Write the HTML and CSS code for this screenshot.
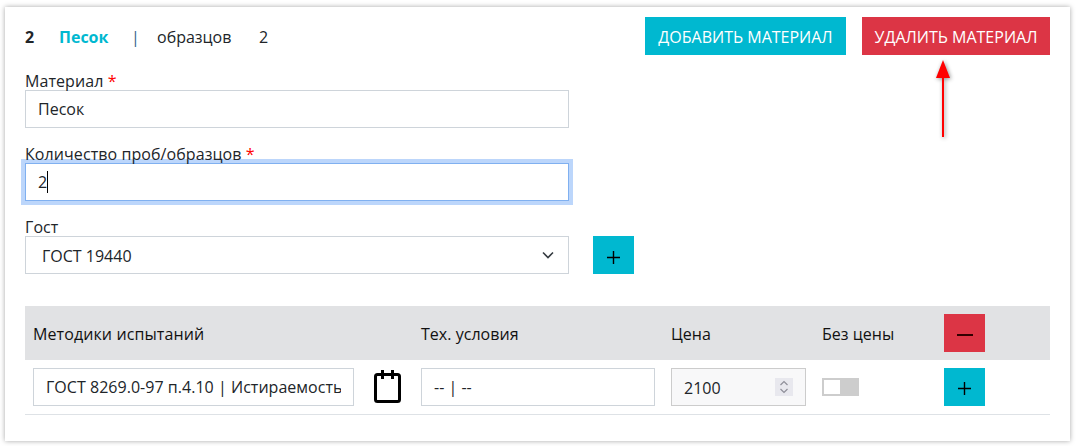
FILE: index.html
```html
<!DOCTYPE html>
<html lang="ru">
<head>
<meta charset="utf-8">
<title>Материал</title>
<link rel="stylesheet" href="styles.css">
</head>
<body>
<main class="card">
  <header class="toolbar">
    <div class="summary">
      <b class="num">2</b>
      <b class="name">Песок</b>
      <span class="sep">|</span>
      <span class="samples">образцов</span>
      <span class="count">2</span>
    </div>
    <div class="actions">
      <button class="btn btn-teal btn-add" type="button">ДОБАВИТЬ МАТЕРИАЛ</button>
      <button class="btn btn-red btn-del" type="button">УДАЛИТЬ МАТЕРИАЛ</button>
    </div>
  </header>

  <div class="field">
    <label class="label">Материал <span class="req">*</span></label>
    <input class="input" type="text" value="Песок">
  </div>
  <div class="field">
    <label class="label">Количество проб/образцов <span class="req">*</span></label>
    <div class="focus-wrap">
      <input class="input input-focus" type="text" value="2">
      <span class="caret"></span>
    </div>
  </div>
  <div class="field">
    <label class="label">Гост</label>
    <div class="select-row">
      <div class="select-wrap">
        <select class="select"><option>ГОСТ 19440</option></select>
        <svg class="chevron" width="12" height="8" viewBox="0 0 12 8"><path d="M1 1.500l5 5 5-5" fill="none" stroke="#343a40" stroke-width="1.600"/></svg>
      </div>
      <button class="btn btn-teal btn-icon" type="button" aria-label="Добавить">
        <svg width="13" height="13" viewBox="0 0 13 13"><path d="M6.500 0v13M0 6.500h13" stroke="#000" stroke-width="1.400"/></svg>
      </button>
    </div>
  </div>

  <section class="table">
    <div class="row row-head">
      <div class="cell cell-wide">Методики испытаний</div>
      <div></div>
      <div class="cell">Тех. условия</div>
      <div class="cell">Цена</div>
      <div class="cell">Без цены</div>
      <button class="btn btn-red btn-icon" type="button" aria-label="Удалить">
        <svg width="16" height="2" viewBox="0 0 16 2"><path d="M0 1h16" stroke="#300" stroke-width="2"/></svg>
      </button>
    </div>
    <div class="row row-body">
      <input class="input input-method" type="text" value="ГОСТ 8269.0-97 п.4.10 | Истираемость">
      <svg class="note" width="27" height="33" viewBox="0 0 27 33"><path d="M8.500 0v9M18.500 0v9" stroke="#000" stroke-width="3"/><rect x="1.500" y="4.500" width="24" height="27" rx="2" fill="none" stroke="#000" stroke-width="3"/></svg>
      <input class="input input-cond" type="text" value="-- | --">
      <div class="price">
        <input class="input input-price" type="text" value="2100">
        <span class="spin">
          <svg width="10" height="14" viewBox="0 0 10 14"><path d="M1.500 5L5 1.500 8.500 5M1.500 9L5 12.500 8.500 9" fill="none" stroke="#8f8f99" stroke-width="1.200"/></svg>
        </span>
      </div>
      <div class="toggle"><span class="knob"></span></div>
      <button class="btn btn-teal btn-icon" type="button" aria-label="Добавить">
        <svg width="13" height="13" viewBox="0 0 13 13"><path d="M6.500 0v13M0 6.500h13" stroke="#000" stroke-width="1.400"/></svg>
      </button>
    </div>
  </section>

  <svg class="arrow" width="24" height="90" viewBox="0 0 24 90"><path d="M12 12V77" stroke="#f00" stroke-width="2" fill="none"/><path d="M12 0L19 18H5Z" fill="#f00"/></svg>
</main>
</body>
</html>
```

FILE: styles.css
```css
* { box-sizing: border-box; }
html, body { margin: 0; background: #fff; }
body {
  padding: 7px 6px 5px 5px;
  font-family: "Open Sans", "Noto Sans", sans-serif;
  font-size: 16px;
  line-height: 20px;
  color: #212529;
}
.card {
  position: relative;
  height: 434px;
  padding: 10px 20px 0;
  background: #fff;
  box-shadow: 0 0 5px rgba(0, 0, 0, .35);
}
.toolbar { display: flex; justify-content: space-between; align-items: center; height: 38px; margin-bottom: 15px; }
.summary { display: flex; align-items: center; padding-top: 2px; }
.num { width: 34px; }
.name { width: 72px; color: #00b8d0; }
.sep { width: 26px; color: #37618a; }
.samples { width: 102px; }
.actions { display: flex; gap: 16px; }
.btn { border: 0; padding: 0; margin: 0; font: inherit; cursor: pointer; display: flex; align-items: center; justify-content: center; }
.btn-teal { background: #00b8d0; }
.btn-red { background: #dc3545; }
.btn-add, .btn-del { height: 38px; color: #fff; padding-top: 2px; }
.btn-add { width: 201px; }
.btn-del { width: 188px; }
.btn-icon { width: 41px; height: 38px; padding-top: 4px; }
.field { margin-bottom: 15px; }
.label { display: block; position: relative; z-index: 1; height: 20px; padding-top: 1px; letter-spacing: .08px; }
.req { color: #f00; }
.input {
  display: block;
  width: 100%;
  height: 38px;
  padding: 0 12px;
  border: 1px solid #ced4da;
  border-radius: 0;
  background: #fff;
  color: #212529;
  font: inherit;
  outline: none;
}
.field > .input, .focus-wrap, .select-wrap { width: 544px; }
.focus-wrap { position: relative; }
.input-focus { border-color: #80b0f0; box-shadow: 0 0 0 4px #bcd6fb; }
.caret { position: absolute; left: 22px; top: 8px; width: 1px; height: 22px; background: #000; }
.select-row { display: flex; gap: 24px; }
.select-wrap { position: relative; }
.select {
  display: block;
  width: 100%;
  height: 38px;
  padding: 2px 12px 0 16px;
  border: 1px solid #ced4da;
  border-radius: 0;
  background: #fff;
  color: #212529;
  font: inherit;
  appearance: none;
  -webkit-appearance: none;
  outline: none;
}
.chevron { position: absolute; right: 15px; top: 15px; }
.table { margin-top: 32px; }
.row {
  display: grid;
  grid-template-columns: 321px 67px 250px 151px 122px 41px;
  align-items: center;
  padding: 0 8px;
  height: 54px;
}
.row-head { background: #e1e2e4; color: #111; }
.cell { padding-top: 2px; letter-spacing: .03px; }
.cell-wide { letter-spacing: .1px; }
.row-body { height: 55px; padding-bottom: 1px; border-bottom: 1px solid #dee2e6; color: #212529; }
.input-method { letter-spacing: .03px; }
.note { margin-left: 20px; }
.input-cond { width: 234px; }
.price { position: relative; width: 135px; }
.input-price { padding-top: 2px; background: #f8f8f9; border-color: #ccc; }
.spin {
  position: absolute;
  left: 104px;
  top: 10px;
  width: 18px;
  height: 18px;
  background: #e8e8ee;
  display: flex;
  align-items: center;
  justify-content: center;
}
.toggle { width: 37px; height: 18px; background: #cdcdcd; padding: 2px; }
.knob { display: block; width: 16px; height: 14px; background: #fff; }
.arrow { position: absolute; left: 926px; top: 53px; filter: drop-shadow(1px 1px 2px rgba(0, 0, 0, .45)); }
```
